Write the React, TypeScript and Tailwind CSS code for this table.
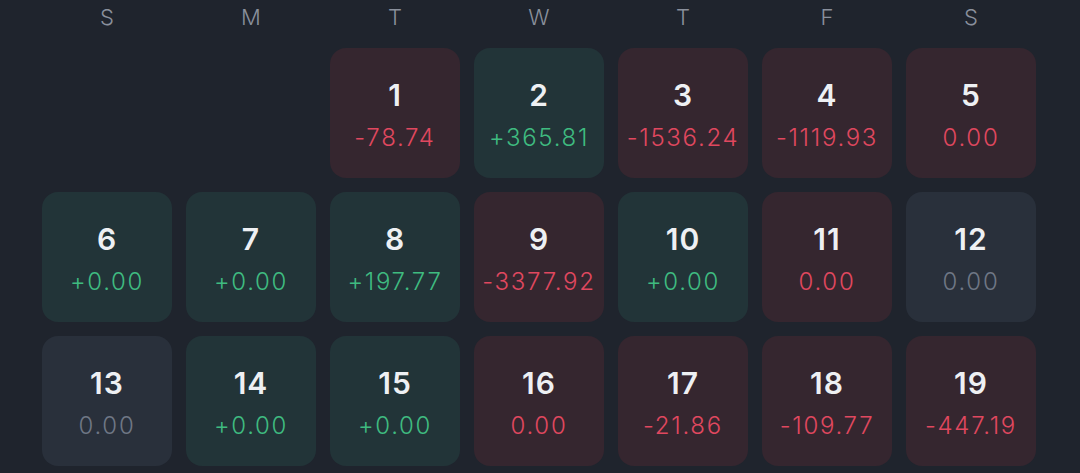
type Tone = "loss" | "gain" | "flat";

type Day = { day: number; value: string; tone: Tone } | null;

const week = ["S", "M", "T", "W", "T", "F", "S"];

const days: Day[] = [
  null,
  null,
  { day: 1, value: "-78.74", tone: "loss" },
  { day: 2, value: "+365.81", tone: "gain" },
  { day: 3, value: "-1536.24", tone: "loss" },
  { day: 4, value: "-1119.93", tone: "loss" },
  { day: 5, value: "0.00", tone: "loss" },
  { day: 6, value: "+0.00", tone: "gain" },
  { day: 7, value: "+0.00", tone: "gain" },
  { day: 8, value: "+197.77", tone: "gain" },
  { day: 9, value: "-3377.92", tone: "loss" },
  { day: 10, value: "+0.00", tone: "gain" },
  { day: 11, value: "0.00", tone: "loss" },
  { day: 12, value: "0.00", tone: "flat" },
  { day: 13, value: "0.00", tone: "flat" },
  { day: 14, value: "+0.00", tone: "gain" },
  { day: 15, value: "+0.00", tone: "gain" },
  { day: 16, value: "0.00", tone: "loss" },
  { day: 17, value: "-21.86", tone: "loss" },
  { day: 18, value: "-109.77", tone: "loss" },
  { day: 19, value: "-447.19", tone: "loss" },
];

const cellStyles: Record<Tone, string> = {
  loss: "bg-[#35262f] text-[#e0485f]",
  gain: "bg-[#223438] text-[#3fbb80]",
  flat: "bg-[#29303b] text-[#6f7785]",
};

export default function App() {
  return (
    <div
      className="h-[473px] w-[1080px] overflow-hidden bg-[#1f242d] pl-[42px] pr-[44px]"
      style={{ fontFamily: "Inter, 'Noto Sans', sans-serif" }}
    >
      <div className="grid grid-cols-7 gap-x-[14px]">
        {week.map((d, i) => (
          <div key={i} className="flex h-[34px] items-center justify-center text-[22px] font-light text-[#8a909c]">
            {d}
          </div>
        ))}
      </div>
      <div className="mt-[14px] grid grid-cols-7 gap-[14px]">
        {days.map((item, i) =>
          item ? (
            <div
              key={i}
              className={`flex h-[130px] flex-col items-center justify-center rounded-[16px] pt-[4px] ${cellStyles[item.tone]}`}
            >
              <div className="text-[30px] font-semibold leading-none tracking-[1px] text-[#eef0f3]">{item.day}</div>
              <div className="mt-[16px] text-[24px] font-light leading-none tracking-[1.7px]">{item.value}</div>
            </div>
          ) : (
            <div key={i} className="h-[130px]" />
          )
        )}
      </div>
    </div>
  );
}
